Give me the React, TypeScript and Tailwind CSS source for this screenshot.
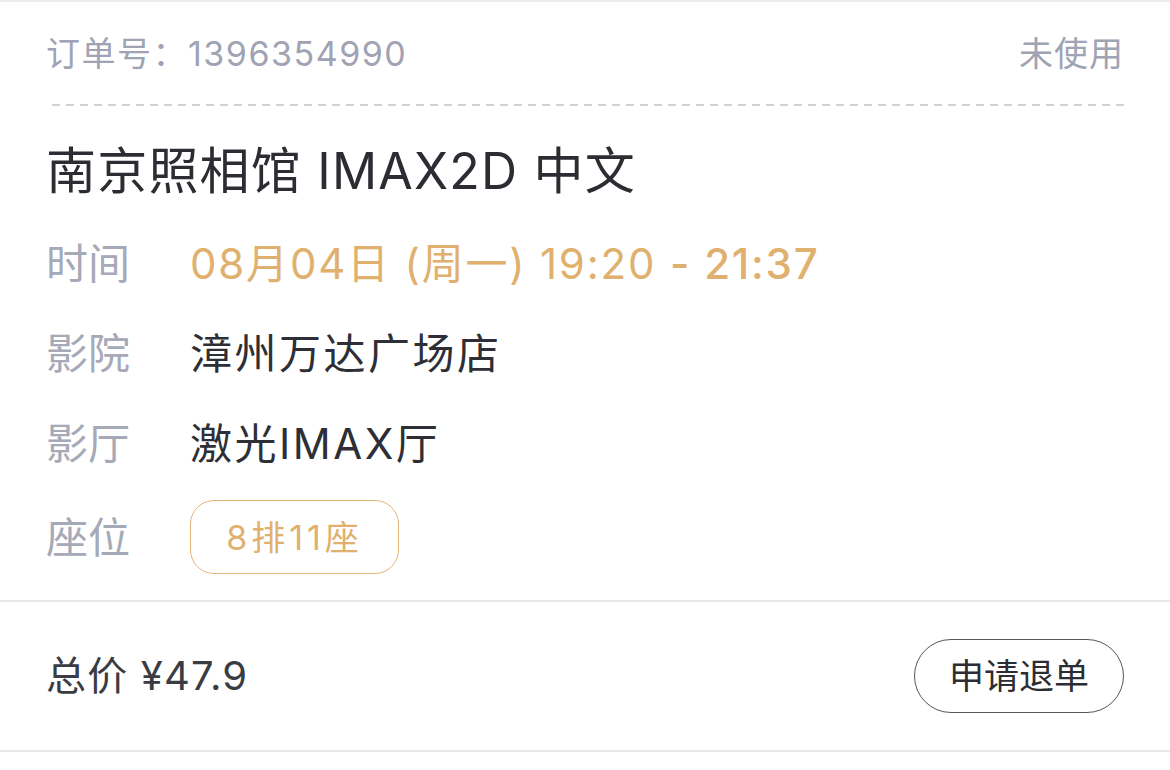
const rows = [
  { label: "影院", value: "漳州万达广场店" },
  { label: "影厅", value: "激光IMAX厅" },
];

export default function App() {
  return (
    <div
      className="w-[1170px] h-[770px] bg-white flex flex-col"
      style={{ fontFamily: 'Inter, "Noto Sans CJK SC", sans-serif' }}
    >
      <div className="h-[2px] bg-[#ececf0]" />

      <div className="px-[46px] flex flex-col">
        {/* Header */}
        <div className="h-[102px] flex items-center justify-between text-[34px] text-[#a0a3b3]">
          <span className="tracking-[1.5px]">订单号：1396354990</span>
          <span className="tracking-[1px]">未使用</span>
        </div>
        <div className="h-[2px] w-full bg-[linear-gradient(to_right,transparent_0_6px,#d2d2d4_6px_14px)] bg-[length:14px_2px] bg-repeat-x bg-right" />

        {/* Title */}
        <div className="h-[112px] pt-[18px] flex items-center text-[50px] text-[#2c2d33] tracking-[1.2px]">
          南京照相馆 IMAX2D 中文
        </div>

        {/* Time */}
        <div className="h-[90px] flex items-center text-[42px]">
          <span className="w-[144px] text-[#a6a9b7]">时间</span>
          <span className="text-[#e0b16e] tracking-[1.8px]">
            08月04日 (周一) 19:20 <span className="font-medium">- 21:37</span>
          </span>
        </div>

        {rows.map((r) => (
          <div key={r.label} className="h-[90px] flex items-center text-[42px]">
            <span className="w-[144px] text-[#a6a9b7]">{r.label}</span>
            <span className="text-[#2e2f36] tracking-[2.5px]">{r.value}</span>
          </div>
        ))}

        {/* Seat */}
        <div className="pt-[12px] pb-[26px] flex items-center text-[42px]">
          <span className="w-[144px] text-[#a6a9b7]">座位</span>
          <div className="w-[209px] h-[74px] rounded-[24px] border-[1.5px] border-[#e2b77a] flex items-center justify-center text-[34px] text-[#e0b16e] tracking-[4px]">
            8排11座
          </div>
        </div>
      </div>

      <div className="h-[2px] bg-[#e8e8ea]" />

      {/* Footer */}
      <div className="h-[148px] px-[46px] flex items-center justify-between">
        <span className="text-[40px] text-[#3a3c44] tracking-[1.2px]">总价 ¥47.9</span>
        <button className="w-[210px] h-[74px] rounded-full border-[1.5px] border-[#55565c] flex items-center justify-center text-[35px] text-[#2c2d33]">
          申请退单
        </button>
      </div>

      <div className="h-[2px] bg-[#e8e8ea]" />
    </div>
  );
}
